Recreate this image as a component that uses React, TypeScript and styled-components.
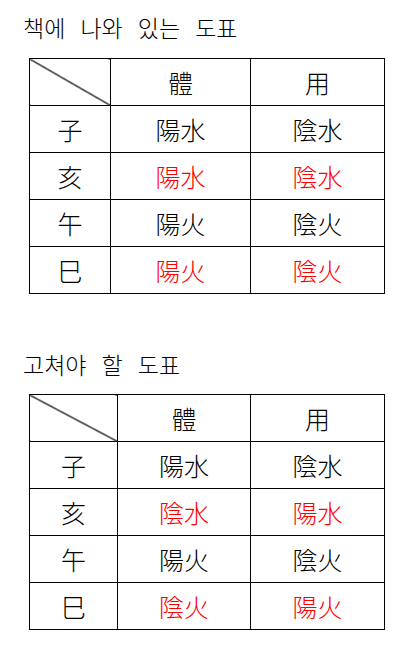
import React from "react";
import styled, { createGlobalStyle } from "styled-components";

const Global = createGlobalStyle`
  html, body { margin: 0; padding: 0; background: #fff; }
  body { font-family: "Noto Sans CJK KR", "Noto Sans", sans-serif; color: #000; }
`;

const Page = styled.div`
  display: flex;
  flex-direction: column;
  padding: 0 0 0 23px;
  width: 410px;
  box-sizing: border-box;
`;

const Title = styled.div<{ $top: number }>`
  margin-top: ${(p) => p.$top}px;
  font-size: 23px;
  line-height: 24px;
  height: 24px;
  word-spacing: 10px;
  font-weight: 300;
`;

const Table = styled.table<{ $top: number }>`
  margin-top: ${(p) => p.$top}px;
  margin-left: 6px;
  border-collapse: collapse;
  table-layout: fixed;
  width: 355px;
`;

const Cell = styled.td<{ $red?: boolean }>`
  border: 1px solid #000;
  height: 46px;
  padding: 0;
  text-align: center;
  vertical-align: middle;
  font-size: 25px;
  font-weight: 300;
  line-height: 1;
  color: ${(p) => (p.$red ? "#ff0000" : "#000")};
`;

const Corner = styled.td`
  border: 1px solid #000;
  height: 46px;
  padding: 0;
  background: linear-gradient(
    to top right,
    transparent calc(50% - 0.9px),
    #000 calc(50% - 0.3px),
    #000 calc(50% + 0.3px),
    transparent calc(50% + 0.9px)
  );
`;

type Row = { branch: string; a: string; b: string; red?: boolean };

const book: Row[] = [
  { branch: "子", a: "陽水", b: "陰水" },
  { branch: "亥", a: "陽水", b: "陰水", red: true },
  { branch: "午", a: "陽火", b: "陰火" },
  { branch: "巳", a: "陽火", b: "陰火", red: true },
];

const fixed: Row[] = [
  { branch: "子", a: "陽水", b: "陰水" },
  { branch: "亥", a: "陰水", b: "陽水", red: true },
  { branch: "午", a: "陽火", b: "陰火" },
  { branch: "巳", a: "陰火", b: "陽火", red: true },
];

function Chart({ rows, cols, top }: { rows: Row[]; cols: number[]; top: number }) {
  return (
    <Table $top={top}>
      <colgroup>
        {cols.map((w, i) => (
          <col key={i} style={{ width: w }} />
        ))}
      </colgroup>
      <tbody>
        <tr>
          <Corner />
          <Cell>體</Cell>
          <Cell>用</Cell>
        </tr>
        {rows.map((r) => (
          <tr key={r.branch}>
            <Cell>{r.branch}</Cell>
            <Cell $red={r.red}>{r.a}</Cell>
            <Cell $red={r.red}>{r.b}</Cell>
          </tr>
        ))}
      </tbody>
    </Table>
  );
}

export default function App() {
  return (
    <>
      <Global />
      <Page>
        <Title $top={15}>책에 나와 있는 도표</Title>
        <Chart rows={book} cols={[81, 140, 134]} top={19} />
        <Title $top={58}>고쳐야 할 도표</Title>
        <Chart rows={fixed} cols={[88, 133, 134]} top={18} />
      </Page>
    </>
  );
}
